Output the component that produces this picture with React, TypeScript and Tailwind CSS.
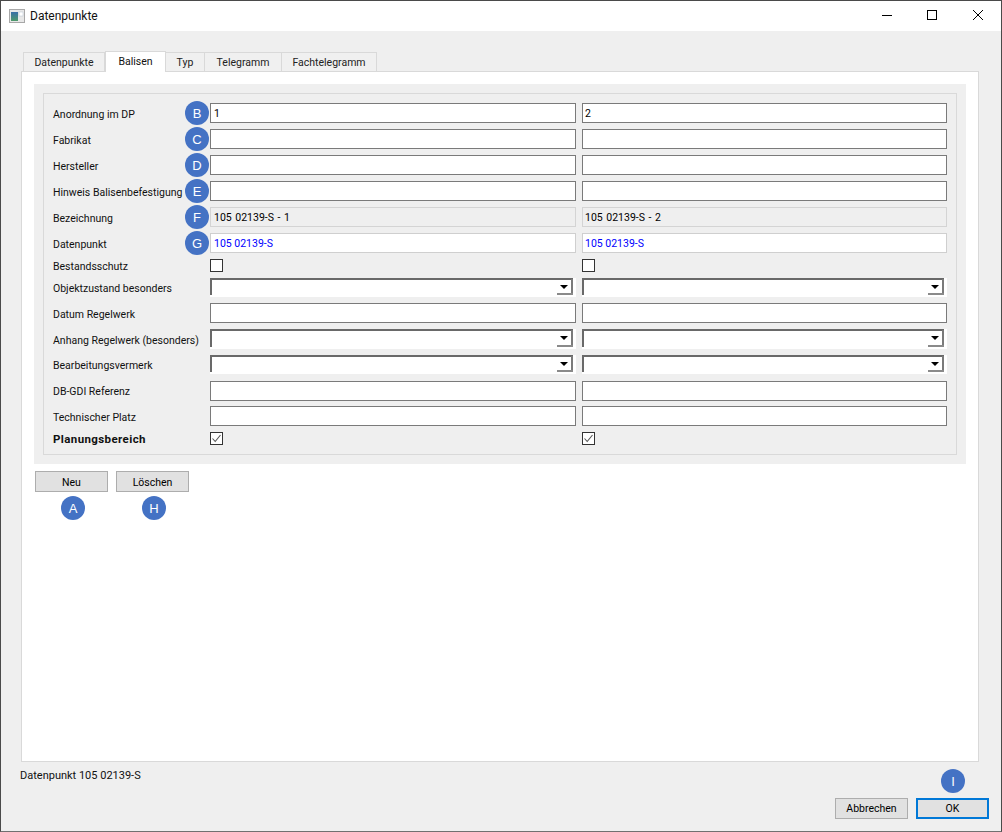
import React from "react";

const Badge = ({ l, x, y }: { l: string; x: string; y: string }) => (
  <div className={`absolute ${x} ${y} w-6 h-6 rounded-full bg-[#4472c4] text-white text-[13px] font-['Liberation_Sans',sans-serif] flex items-center justify-center`}>{l}</div>
);

const Input = ({ v, kind, second }: { v?: string; kind?: "ro" | "blue"; second?: boolean }) => (
  <div
    className={`h-full flex items-center ${second ? "pl-[2px]" : "pl-[3px]"} pt-[3px] border ${
      kind === "ro"
        ? "border-[#d4d4d4] bg-[#efefef] text-black [word-spacing:1px]"
        : kind === "blue"
          ? "border-[#cfcfcf] bg-white text-[#0000ff]"
          : "border-[#7a7a7a] bg-white text-black"
    }`}
  >
    {v}
  </div>
);

const Check = ({ on }: { on?: boolean }) => (
  <div className="w-[13px] h-[13px] border border-[#333333] bg-white flex items-center justify-center">
    {on && (
      <svg width="11" height="11" viewBox="0 0 11 11">
        <path d="M1.5 5.5 L4.2 8.5 L9.5 2" fill="none" stroke="#555" strokeWidth="1.1" />
      </svg>
    )}
  </div>
);

const Combo = () => (
  <div className="h-full relative bg-white">
    <div className="absolute left-0 top-0 right-[3px] bottom-[2px] border-t-2 border-l-2 border-[#696969]" />
    <div className="absolute right-[3px] top-[1px] bottom-[2px] w-[16px] border-r-2 border-[#7a7a7a]" />
    <div className="absolute right-[3px] bottom-[2px] h-[5px] w-[16px] border-b-2 border-[#8a8a8a]" />
    <div className="absolute right-[8px] top-[7px] w-0 h-0 border-x-[4px] border-x-transparent border-t-[4px] border-t-black" />
  </div>
);

type Row = { label: string; h: string; mt: string; lp: string; a?: React.ReactNode; b?: React.ReactNode; bold?: boolean };

const rows: Row[] = [
  { label: "Anordnung im DP", h: "h-5", mt: "mt-0", lp: "pt-[5px]", a: <Input v="1" />, b: <Input second v="2" /> },
  { label: "Fabrikat", h: "h-5", mt: "mt-[6px]", lp: "pt-[5px]", a: <Input />, b: <Input /> },
  { label: "Hersteller", h: "h-5", mt: "mt-[6px]", lp: "pt-[5px]", a: <Input />, b: <Input /> },
  { label: "Hinweis Balisenbefestigung", h: "h-5", mt: "mt-[6px]", lp: "pt-[5px]", a: <Input />, b: <Input /> },
  { label: "Bezeichnung", h: "h-5", mt: "mt-[6px]", lp: "pt-[5px]", a: <Input kind="ro" v="105 02139-S - 1" />, b: <Input second kind="ro" v="105 02139-S - 2" /> },
  { label: "Datenpunkt", h: "h-5", mt: "mt-[6px]", lp: "pt-[5px]", a: <Input kind="blue" v="105 02139-S" />, b: <Input second kind="blue" v="105 02139-S" /> },
  { label: "Bestandsschutz", h: "h-[13px]", mt: "mt-[6px]", lp: "pt-[3px]", a: <Check />, b: <Check /> },
  { label: "Objektzustand besonders", h: "h-[19px]", mt: "mt-[6px]", lp: "pt-[3px]", a: <Combo />, b: <Combo /> },
  { label: "Datum Regelwerk", h: "h-5", mt: "mt-[6px]", lp: "pt-[5px]", a: <Input />, b: <Input /> },
  { label: "Anhang Regelwerk (besonders)", h: "h-5", mt: "mt-[6px]", lp: "pt-[5px]", a: <Combo />, b: <Combo /> },
  { label: "Bearbeitungsvermerk", h: "h-[19px]", mt: "mt-[6px]", lp: "pt-[3px]", a: <Combo />, b: <Combo /> },
  { label: "DB-GDI Referenz", h: "h-5", mt: "mt-[7px]", lp: "pt-[3px]", a: <Input />, b: <Input /> },
  { label: "Technischer Platz", h: "h-5", mt: "mt-[5px]", lp: "pt-[5px]", a: <Input />, b: <Input /> },
  { label: "Planungsbereich", h: "h-[13px]", mt: "mt-[6px]", lp: "pt-[3px]", a: <Check on />, b: <Check on />, bold: true },
];

const tabs = ["Datenpunkte", "Balisen", "Typ", "Telegramm", "Fachtelegramm"];
const tabW = ["w-[82px]", "w-[61px]", "w-[39px]", "w-[77px]", "w-[95px]"];

export default function App() {
  return (
    <div className="relative w-[1002px] h-[832px] bg-[#efefef] border border-[#4a4a4a] border-b-[#707070] overflow-hidden text-[10.5px] text-black font-['Roboto','Liberation_Sans',sans-serif] leading-none">
      <div className="h-[30px] bg-white flex items-center">
        <svg className="ml-[8px]" width="16" height="14" viewBox="0 0 16 14">
          <defs>
            <linearGradient id="ic" x1="0" y1="0" x2="0" y2="1">
              <stop offset="0" stopColor="#3a6fa8" />
              <stop offset="1" stopColor="#4f9a6a" />
            </linearGradient>
          </defs>
          <rect x="0.5" y="0.5" width="15" height="13" fill="#e8e8e8" stroke="#a8a8a8" />
          <rect x="2" y="3" width="7" height="9" fill="url(#ic)" />
          <rect x="10" y="3" width="4" height="4" fill="#ffffff" stroke="#b8c4d0" strokeWidth="0.5" />
        </svg>
        <span className="ml-[5px] text-[12px] text-[#111]">Datenpunkte</span>
        <div className="ml-auto flex items-center">
          <svg width="46" height="30" viewBox="0 0 46 30"><path d="M19 14.5 H29" stroke="#000" strokeWidth="1" /></svg>
          <svg width="46" height="30" viewBox="0 0 46 30"><rect x="18.5" y="9.5" width="9" height="9" fill="none" stroke="#000" strokeWidth="1" /></svg>
          <svg width="46" height="30" viewBox="0 0 46 30"><path d="M18 9 L28 19 M28 9 L18 19" stroke="#000" strokeWidth="1" /></svg>
        </div>
      </div>

      <div className="pl-[20px] pr-[22px] pt-[20px]">
        <div className="flex items-end h-[20px] pl-[2px] relative z-10">
          {tabs.map((t, i) =>
            i === 1 ? (
              <div key={t} className={`${tabW[i]} h-[21px] -mb-[1px] pt-px bg-white border border-b-0 border-[#d9d9d9] flex items-center justify-center text-[#111]`}>
                {t}
              </div>
            ) : (
              <div key={t} className={`${tabW[i]} h-[19px] pt-[3px] bg-[#f0f0f0] border border-b-0 border-l-0 first:border-l border-[#d9d9d9] flex items-center justify-center text-[#222]`}>
                {t}
              </div>
            )
          )}
        </div>
        <div className="h-[691px] bg-white border border-[#d9d9d9] pt-[12px] px-[12px]">
          <div className="w-[932px] h-[380px] bg-[#efefef] p-[9px]">
            <div className="h-[362px] border border-[#d9d9d9] pt-[9px] pl-[9px] pr-[9px]">
              {rows.map((r) => (
                <div key={r.label} className={`flex items-center ${r.h} ${r.mt}`}>
                  <div className={`w-[157px] shrink-0 ${r.lp} ${r.bold ? "font-bold text-[11.5px] tracking-[0.4px]" : ""} text-[#111] whitespace-nowrap`}>{r.label}</div>
                  <div className="w-[366px] h-full shrink-0">{r.a}</div>
                  <div className="w-[365px] h-full shrink-0 ml-[6px]">{r.b}</div>
                </div>
              ))}
            </div>
          </div>
          <div className="flex mt-[7px] gap-[8px] ml-px">
            <div className="w-[73px] h-[21px] pt-[3px] bg-[#e1e1e1] border border-[#adadad] flex items-center justify-center">Neu</div>
            <div className="w-[73px] h-[21px] pt-[3px] bg-[#e1e1e1] border border-[#adadad] flex items-center justify-center">Löschen</div>
          </div>
        </div>
      </div>

      <div className="absolute left-[19px] top-[768px] h-[12px] flex items-center text-[11px] text-[#111]">Datenpunkt 105 02139-S</div>
      <div className="absolute left-[834px] top-[797px] flex gap-[8px]">
        <div className="w-[73px] h-[21px] pt-px bg-[#e1e1e1] border border-[#adadad] flex items-center justify-center">Abbrechen</div>
        <div className="w-[73px] h-[21px] pt-px bg-[#e1e1e1] border-2 border-[#0078d7] flex items-center justify-center">OK</div>
      </div>

      <Badge l="B" x="left-[184px]" y="top-[100px]" />
      <Badge l="C" x="left-[184px]" y="top-[126px]" />
      <Badge l="D" x="left-[184px]" y="top-[152px]" />
      <Badge l="E" x="left-[184px]" y="top-[178px]" />
      <Badge l="F" x="left-[184px]" y="top-[204px]" />
      <Badge l="G" x="left-[184px]" y="top-[230px]" />
      <Badge l="A" x="left-[60px]" y="top-[495px]" />
      <Badge l="H" x="left-[141px]" y="top-[495px]" />
      <Badge l="I" x="left-[940px]" y="top-[768px]" />
    </div>
  );
}
